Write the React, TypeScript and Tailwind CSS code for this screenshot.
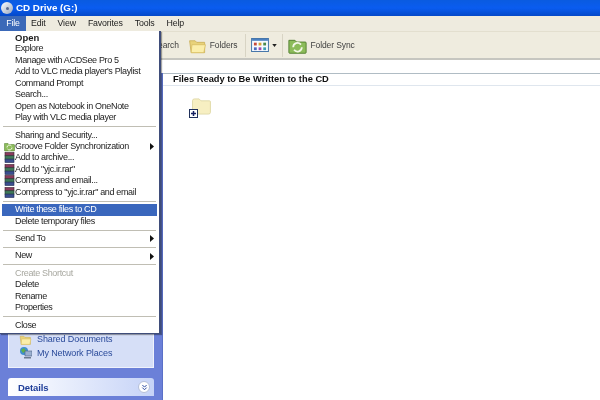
import { ChevronsDown } from "lucide-react";

const menuGroups = [
  [
    { label: "Open", bold: true },
    { label: "Explore" },
    { label: "Manage with ACDSee Pro 5" },
    { label: "Add to VLC media player's Playlist" },
    { label: "Command Prompt" },
    { label: "Search..." },
    { label: "Open as Notebook in OneNote" },
    { label: "Play with VLC media player" },
  ],
  [
    { label: "Sharing and Security..." },
    { label: "Groove Folder Synchronization", icon: "groove", arrow: true },
    { label: "Add to archive...", icon: "rar" },
    { label: 'Add to "yjc.ir.rar"', icon: "rar" },
    { label: "Compress and email...", icon: "rar" },
    { label: 'Compress to "yjc.ir.rar" and email', icon: "rar" },
  ],
  [{ label: "Write these files to CD", active: true }, { label: "Delete temporary files" }],
  [{ label: "Send To", arrow: true }],
  [{ label: "New", arrow: true }],
  [{ label: "Create Shortcut", disabled: true }, { label: "Delete" }, { label: "Rename" }, { label: "Properties" }],
  [{ label: "Close" }],
];

function RarIcon() {
  return (
    <svg width="11" height="11" viewBox="0 0 11 11" className="shrink-0">
      <rect x="1" y="0.5" width="9" height="3.4" fill="#8a3a5c" stroke="#3a2030" strokeWidth="0.6" />
      <rect x="1" y="3.8" width="9" height="3.4" fill="#3f7a5a" stroke="#203a30" strokeWidth="0.6" />
      <rect x="1" y="7.1" width="9" height="3.4" fill="#3a4f90" stroke="#202a50" strokeWidth="0.6" />
    </svg>
  );
}

function GrooveIcon({ size = 11 }: { size?: number }) {
  return (
    <svg width={size} height={size} viewBox="0 0 22 22" className="shrink-0">
      <path d="M1 5h7l2 2h10a1 1 0 0 1 1 1v11a1 1 0 0 1-1 1H2a1 1 0 0 1-1-1z" fill="#8cbc5a" stroke="#4a7a2a" />
      <path d="M6 13a5 5 0 0 1 9-3M16 13a5 5 0 0 1-9 3" fill="none" stroke="#f2f7e6" strokeWidth="2" />
    </svg>
  );
}

function FolderIcon({ size = 24 }: { size?: number }) {
  return (
    <svg width={size} height={size} viewBox="0 0 24 24" className="shrink-0">
      <path d="M2 6h7l2 2h10v13H4z" fill="#e8d27a" stroke="#c9ad55" />
      <path d="M5 11h17l-2 10H4z" fill="#fbeeaa" stroke="#d8bd62" />
    </svg>
  );
}

function Divider() {
  return <div className="w-px h-[23px] bg-[#d8d4c4]" />;
}

export default function App() {
  return (
    <div className="relative w-[600px] h-[400px] overflow-hidden bg-white flex flex-col font-['Liberation_Sans',sans-serif] text-[8.5px] tracking-[-0.1px] text-[#1c1c1c] blur-[0.3px]">
      {/* title bar */}
      <div className="h-4 shrink-0 flex items-center pl-[1px] gap-[3px] bg-gradient-to-b from-[#0a5be0] via-[#0a5cf0] to-[#0448c8]">
        <div className="w-3 h-3 rounded-full bg-gradient-to-br from-white to-[#9aa8c0] flex items-center justify-center">
          <div className="w-[3px] h-[3px] rounded-full bg-[#5a6a90]" />
        </div>
        <span className="text-white font-bold text-[9.8px] tracking-[0px]">CD Drive (G:)</span>
      </div>

      {/* menu bar */}
      <div className="h-[16px] shrink-0 flex items-center bg-[#eeebdf] border-b border-[#e3dfcf] text-[8.8px] tracking-[-0.15px]">
        <div className="w-[26px] h-full bg-[#3b69b8] text-white flex items-center justify-center">File</div>
        <div className="flex gap-[12px] ml-[5px]">
          <span>Edit</span>
          <span>View</span>
          <span>Favorites</span>
          <span>Tools</span>
          <span>Help</span>
        </div>
      </div>

      {/* toolbar */}
      <div className="h-[28px] shrink-0 flex items-center bg-[#efecdf] border-b-2 border-[#c6c6c0] text-[#404040]">
        <span className="ml-[158px]">earch</span>
        <div className="ml-[9px] flex items-center gap-[3px]">
          <FolderIcon size={19} />
          <span>Folders</span>
        </div>
        <div className="ml-[8px]"><Divider /></div>
        <svg width="18" height="14" viewBox="0 0 19 15" className="ml-[5px] shrink-0">
          <rect x="0.5" y="0.5" width="18" height="14" fill="#f8fbff" stroke="#3a6ea5" />
          <rect x="1" y="1" width="17" height="2" fill="#4a7fc0" />
          <rect x="3" y="5" width="3" height="3" fill="#c84a3a" />
          <rect x="8" y="5" width="3" height="3" fill="#d8a030" />
          <rect x="13" y="5" width="3" height="3" fill="#4a8a4a" />
          <rect x="3" y="10" width="3" height="3" fill="#4a6ac0" />
          <rect x="8" y="10" width="3" height="3" fill="#a04ab0" />
          <rect x="13" y="10" width="3" height="3" fill="#40a0b0" />
        </svg>
        <svg width="5" height="3" viewBox="0 0 6 4" className="ml-[3px] shrink-0">
          <path d="M0 0h6L3 4z" fill="#222" />
        </svg>
        <div className="ml-[5px]"><Divider /></div>
        <div className="ml-[5px] flex items-center gap-[3px]">
          <GrooveIcon size={19} />
          <span>Folder Sync</span>
        </div>
      </div>

      {/* address area */}
      <div className="h-[13px] shrink-0 bg-white" />

      {/* body */}
      <div className="flex flex-1 min-h-0">
        <div className="w-[163px] shrink-0 bg-[#6b80d8] flex flex-col justify-end px-[8px] pb-[4px] border-r border-[#5a70c8]">
          <div className="bg-[#d6dff7] h-[45px] flex flex-col justify-end gap-[0px] pb-[7px] pl-[10px] text-[#2a4a9a] text-[9px] border-x border-b border-white/60">
            <div className="flex items-center gap-[5px]">
              <FolderIcon size={13} />
              <span>Shared Documents</span>
            </div>
            <div className="flex items-center gap-[5px]">
              <svg width="13" height="12" viewBox="0 0 13 12" className="shrink-0">
                <circle cx="5" cy="4" r="4" fill="#3f8fd0" />
                <path d="M2 3l3-2 2 3-3 2z" fill="#5fb04a" />
                <rect x="6" y="4" width="7" height="5" fill="#9ab0d0" stroke="#4a6080" strokeWidth="0.6" />
                <rect x="5" y="10" width="7" height="1.5" fill="#6a7a90" />
              </svg>
              <span>My Network Places</span>
            </div>
          </div>
          <div className="mt-[10px] h-[18px] rounded-t-[3px] bg-gradient-to-r from-white to-[#c6d3f7] flex items-center justify-between pl-[10px] pr-[4px]">
            <span className="font-bold text-[#21409a] text-[9.5px] pt-[2px]">Details</span>
            <div className="w-[12px] h-[12px] rounded-full bg-white border border-[#b5bfd8] flex items-center justify-center">
              <ChevronsDown size={9} strokeWidth={2.5} className="text-[#21409a]" />
            </div>
          </div>
        </div>

        <div className="flex-1">
          <div className="h-[13px] border-t border-[#b0bcc4] border-b border-b-[#dfe6ee] bg-white flex items-center pl-[10px] pt-[1px] font-bold text-[9.3px] tracking-[0px] text-[#111]">
            Files Ready to Be Written to the CD
          </div>
          <div className="relative ml-[26px] mt-[12px] w-[24px] h-[24px]">
            <svg width="22" height="17" viewBox="0 0 22 18" className="absolute left-[1px] top-0">
              <path d="M2 3q0-2 2-2h5l2 2h9q1 0 1 1v11q0 2-2 2H4q-2 0-2-2z" fill="#f7efc2" stroke="#e0d9a8" />
            </svg>
            <div className="absolute left-[0px] top-[11px] w-[9px] h-[9px] bg-white border border-[#20305a] flex items-center justify-center">
              <div className="w-[5px] h-[5px] bg-[#152060] [clip-path:polygon(35%_0,65%_0,65%_35%,100%_35%,100%_65%,65%_65%,65%_100%,35%_100%,35%_65%,0_65%,0_35%,35%_35%)]" />
            </div>
          </div>
        </div>
      </div>

      {/* file menu */}
      <div className="absolute left-0 top-[31px] w-[161px] bg-white border-r-2 border-b border-[#3f4d7a] shadow-[1px_1px_1px_rgba(0,0,0,0.35)] pt-[1px] pb-[2px] px-[2px] text-[9px] tracking-[-0.35px]">
        {menuGroups.map((group, i) => (
          <div key={i}>
            {i > 0 && <div className="h-[1px] bg-[#c0beb4] mx-[1px] my-[2.5px]" />}
            {group.map((item) => (
              <div
                key={item.label}
                className={`h-[11.45px] leading-[11.45px] flex items-center pl-[13px] pr-[3px] relative whitespace-nowrap ${
                  "active" in item && item.active ? "bg-[#3a67bd] text-white" : ""
                } ${"disabled" in item && item.disabled ? "text-[#a8a8a0]" : ""} ${
                  "bold" in item && item.bold ? "font-bold text-[9.5px] tracking-[0px]" : ""
                }`}
              >
                {"icon" in item && (
                  <span className="absolute left-[2px] top-[0px]">
                    {item.icon === "rar" ? <RarIcon /> : <GrooveIcon />}
                  </span>
                )}
                <span>{item.label}</span>
                {"arrow" in item && (
                  <svg width="4" height="7" viewBox="0 0 4 7" className="ml-auto">
                    <path d="M0 0l4 3.5L0 7z" fill="#111" />
                  </svg>
                )}
              </div>
            ))}
          </div>
        ))}
      </div>
    </div>
  );
}
